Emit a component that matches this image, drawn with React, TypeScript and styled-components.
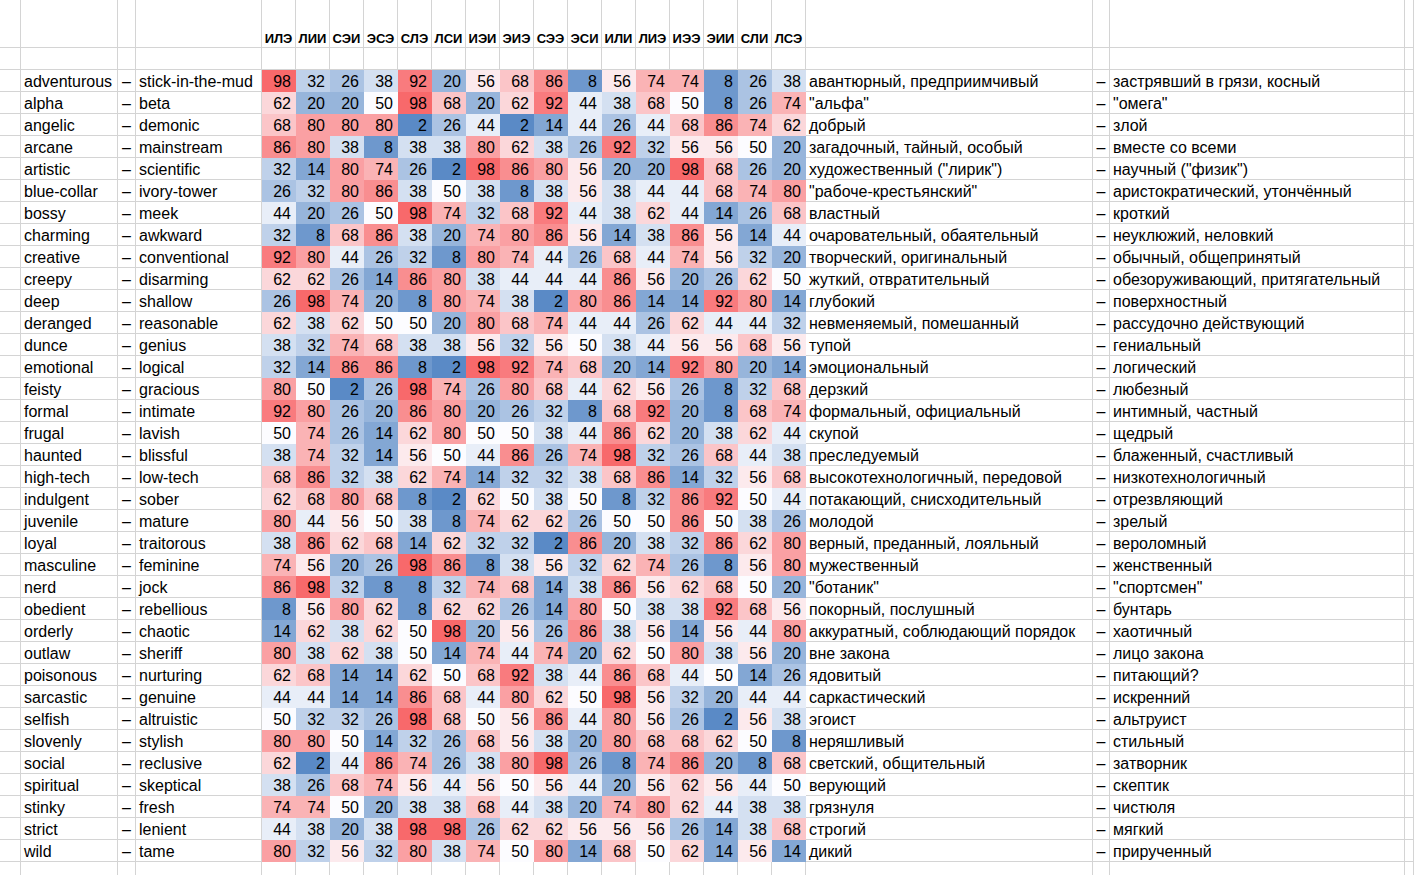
import React from "react"
import styled, { createGlobalStyle } from "styled-components"

const GlobalStyle = createGlobalStyle`
  html, body {
    margin: 0;
    padding: 0;
    background: #fff;
  }
  body {
    font-family: "Liberation Sans", Arial, sans-serif;
    color: #000;
    overflow: hidden;
  }
`

const types = ["ИЛЭ", "ЛИИ", "СЭИ", "ЭСЭ", "СЛЭ", "ЛСИ", "ИЭИ", "ЭИЭ", "СЭЭ", "ЭСИ", "ИЛИ", "ЛИЭ", "ИЭЭ", "ЭИИ", "СЛИ", "ЛСЭ"]

type Trait = [string, string, string, string, string]

// en, en opposite, scores, ru, ru opposite
const traits: Trait[] = [
  ["adventurous", "stick-in-the-mud", "98 32 26 38 92 20 56 68 86 8 56 74 74 8 26 38", "авантюрный, предприимчивый", "застрявший в грязи, косный"],
  ["alpha", "beta", "62 20 20 50 98 68 20 62 92 44 38 68 50 8 26 74", "\"альфа\"", "\"омега\""],
  ["angelic", "demonic", "68 80 80 80 2 26 44 2 14 44 26 44 68 86 74 62", "добрый", "злой"],
  ["arcane", "mainstream", "86 80 38 8 38 38 80 62 38 26 92 32 56 56 50 20", "загадочный, тайный, особый", "вместе со всеми"],
  ["artistic", "scientific", "32 14 80 74 26 2 98 86 80 56 20 20 98 68 26 20", "художественный (\"лирик\")", "научный (\"физик\")"],
  ["blue-collar", "ivory-tower", "26 32 80 86 38 50 38 8 38 56 38 44 44 68 74 80", "\"рабоче-крестьянский\"", "аристократический, утончённый"],
  ["bossy", "meek", "44 20 26 50 98 74 32 68 92 44 38 62 44 14 26 68", "властный", "кроткий"],
  ["charming", "awkward", "32 8 68 86 38 20 74 80 86 56 14 38 86 56 14 44", "очаровательный, обаятельный", "неуклюжий, неловкий"],
  ["creative", "conventional", "92 80 44 26 32 8 80 74 44 26 68 44 74 56 32 20", "творческий, оригинальный", "обычный, общепринятый"],
  ["creepy", "disarming", "62 62 26 14 86 80 38 44 44 44 86 56 20 26 62 50", "жуткий, отвратительный", "обезоруживающий, притягательный"],
  ["deep", "shallow", "26 98 74 20 8 80 74 38 2 80 86 14 14 92 80 14", "глубокий", "поверхностный"],
  ["deranged", "reasonable", "62 38 62 50 50 20 80 68 74 44 44 26 62 44 44 32", "невменяемый, помешанный", "рассудочно действующий"],
  ["dunce", "genius", "38 32 74 68 38 38 56 32 56 50 38 44 56 56 68 56", "тупой", "гениальный"],
  ["emotional", "logical", "32 14 86 86 8 2 98 92 74 68 20 14 92 80 20 14", "эмоциональный", "логический"],
  ["feisty", "gracious", "80 50 2 26 98 74 26 80 68 44 62 56 26 8 32 68", "дерзкий", "любезный"],
  ["formal", "intimate", "92 80 26 20 86 80 20 26 32 8 68 92 20 8 68 74", "формальный, официальный", "интимный, частный"],
  ["frugal", "lavish", "50 74 26 14 62 80 50 50 38 44 86 62 20 38 62 44", "скупой", "щедрый"],
  ["haunted", "blissful", "38 74 32 14 56 50 44 86 26 74 98 32 26 68 44 38", "преследуемый", "блаженный, счастливый"],
  ["high-tech", "low-tech", "68 86 32 38 62 74 14 32 32 38 68 86 14 32 56 68", "высокотехнологичный, передовой", "низкотехнологичный"],
  ["indulgent", "sober", "62 68 80 68 8 2 62 50 38 50 8 32 86 92 50 44", "потакающий, снисходительный", "отрезвляющий"],
  ["juvenile", "mature", "80 44 56 50 38 8 74 62 62 26 50 50 86 50 38 26", "молодой", "зрелый"],
  ["loyal", "traitorous", "38 86 62 68 14 62 32 32 2 86 20 38 32 86 62 80", "верный, преданный, лояльный", "вероломный"],
  ["masculine", "feminine", "74 56 20 26 98 86 8 38 56 32 62 74 26 8 56 80", "мужественный", "женственный"],
  ["nerd", "jock", "86 98 32 8 8 32 74 68 14 38 86 56 62 68 50 20", "\"ботаник\"", "\"спортсмен\""],
  ["obedient", "rebellious", "8 56 80 62 8 62 62 26 14 80 50 38 38 92 68 56", "покорный, послушный", "бунтарь"],
  ["orderly", "chaotic", "14 62 38 62 50 98 20 56 26 86 38 56 14 56 44 80", "аккуратный, соблюдающий порядок", "хаотичный"],
  ["outlaw", "sheriff", "80 38 62 38 50 14 74 44 74 20 62 50 80 38 56 20", "вне закона", "лицо закона"],
  ["poisonous", "nurturing", "62 68 14 14 62 50 68 92 38 44 86 68 44 50 14 26", "ядовитый", "питающий?"],
  ["sarcastic", "genuine", "44 44 14 14 86 68 44 80 62 50 98 56 32 20 44 44", "саркастический", "искренний"],
  ["selfish", "altruistic", "50 32 32 26 98 68 50 56 86 44 80 56 26 2 56 38", "эгоист", "альтруист"],
  ["slovenly", "stylish", "80 80 50 14 32 26 68 56 38 20 80 68 68 62 50 8", "неряшливый", "стильный"],
  ["social", "reclusive", "62 2 44 86 74 26 38 80 98 26 8 74 86 20 8 68", "светский, общительный", "затворник"],
  ["spiritual", "skeptical", "38 26 68 74 56 44 56 50 56 44 20 56 62 56 44 50", "верующий", "скептик"],
  ["stinky", "fresh", "74 74 50 20 38 38 68 44 38 20 74 80 62 44 38 38", "грязнуля", "чистюля"],
  ["strict", "lenient", "44 38 20 38 98 98 26 62 62 56 56 56 26 14 38 68", "строгий", "мягкий"],
  ["wild", "tame", "80 32 56 32 80 38 74 50 80 14 68 50 62 14 56 14", "дикий", "прирученный"],
]

// three-colour scale: blue (2) - white (50) - red (98)
const BLUE = [90, 138, 198]
const WHITE = [252, 252, 255]
const RED = [248, 105, 107]

const heat = (v: number) => {
  const [from, to, t] = v < 50 ? [BLUE, WHITE, (v - 2) / 48] : [WHITE, RED, (v - 50) / 48]
  const c = from.map((f, i) => Math.round(f + (to[i] - f) * t))
  return `rgb(${c.join(",")})`
}

const COLUMNS = "21px 97px 18px 126px repeat(16, 34px) 287px 17px 295px 1fr"

const Sheet = styled.div`
  width: 1414px;
  height: 875px;
  overflow: hidden;
  display: flex;
  flex-direction: column;
`

const Row = styled.div<{ $height: number }>`
  display: grid;
  grid-template-columns: ${COLUMNS};
  height: ${(p) => p.$height}px;
  flex: none;
`

const Cell = styled.div<{ $align?: "left" | "center" | "right" }>`
  box-sizing: border-box;
  min-width: 0;
  border-right: 1px solid #d4d4d4;
  border-bottom: 1px solid #d4d4d4;
  display: flex;
  align-items: flex-end;
  justify-content: ${(p) => (p.$align === "center" ? "center" : p.$align === "right" ? "flex-end" : "flex-start")};
  padding: 0 3px;
  font-size: 16px;
  line-height: 18px;
  white-space: nowrap;
`

const TypeLabel = styled(Cell)`
  font-size: 13px;
  font-weight: bold;
  line-height: 16px;
  padding: 0;
`

const Score = styled(Cell)<{ $value: number }>`
  background: ${(p) => heat(p.$value)};
  border-color: transparent;
  justify-content: flex-end;
  padding-right: 4px;
`

const Blank = ({ count }: { count: number }) => (
  <>
    {Array.from({ length: count }, (_, i) => (
      <Cell key={i} />
    ))}
  </>
)

export default function App() {
  return (
    <Sheet>
      <GlobalStyle />
      <Row $height={48}>
        <Blank count={4} />
        {types.map((t) => (
          <TypeLabel key={t} $align="center">{t}</TypeLabel>
        ))}
        <Blank count={4} />
      </Row>
      <Row $height={22}>
        <Blank count={24} />
      </Row>
      {traits.map(([en, enOpp, scores, ru, ruOpp]) => (
        <Row $height={22} key={en}>
          <Cell />
          <Cell>{en}</Cell>
          <Cell $align="center">–</Cell>
          <Cell>{enOpp}</Cell>
          {scores.split(" ").map((s, i) => (
            <Score key={i} $value={Number(s)}>{s}</Score>
          ))}
          <Cell>{ru}</Cell>
          <Cell $align="center">–</Cell>
          <Cell>{ruOpp}</Cell>
          <Cell />
        </Row>
      ))}
      <Row $height={22}>
        <Blank count={24} />
      </Row>
    </Sheet>
  )
}
